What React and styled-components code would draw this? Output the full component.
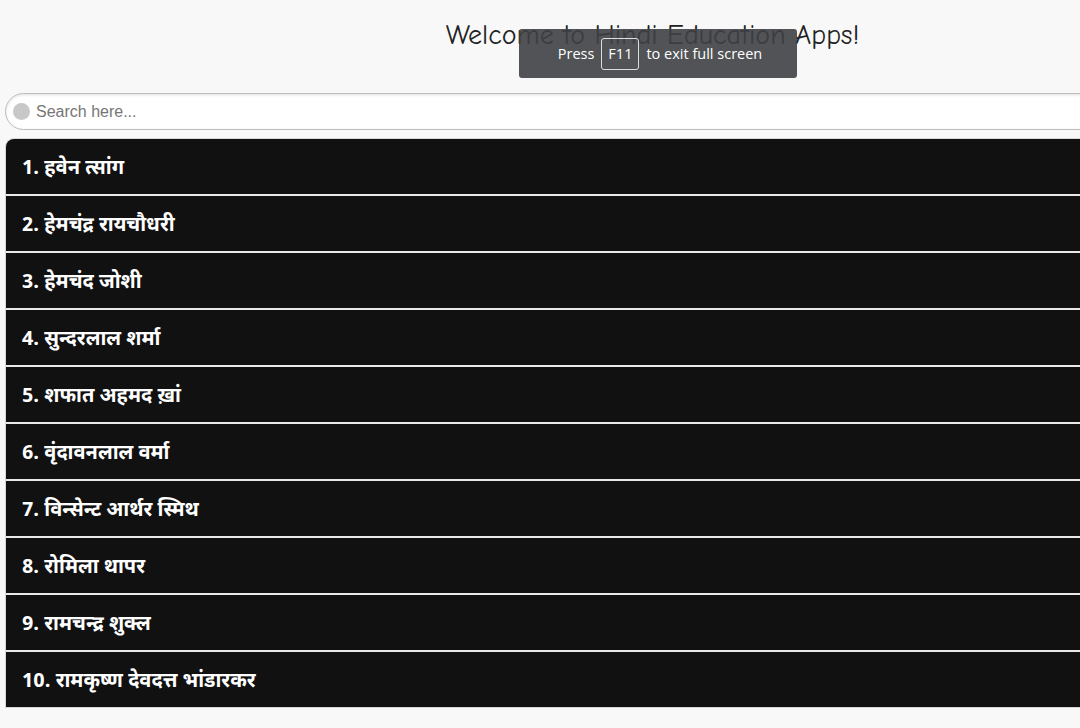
import React from "react";
import styled, { createGlobalStyle } from "styled-components";

const Global = createGlobalStyle`
  html, body { margin: 0; padding: 0; background: #f8f8f8; overflow: hidden; }
  body { width: 1080px; height: 728px; position: relative; }
`;

const Page = styled.div`
  width: 1300px;
  padding: 0 0 0 5px;
  box-sizing: border-box;
`;

const Title = styled.h1`
  margin: 0;
  height: 70px;
  display: flex;
  align-items: center;
  justify-content: center;
  font-family: "Comic Sans MS", "Comic Neue", cursive;
  font-weight: 500;
  font-size: 28px;
  color: #222;
`;

const SearchBox = styled.label`
  display: flex;
  align-items: center;
  gap: 6px;
  height: 37px;
  margin-top: 23px;
  box-sizing: border-box;
  border: 1px solid #bdbdbd;
  border-radius: 19px;
  background: #fff;
  box-shadow: inset 0 1px 3px rgba(0, 0, 0, 0.12);
  padding-left: 7px;
`;

const Dot = styled.span`
  width: 17px;
  height: 17px;
  border-radius: 50%;
  background: #c8c8c8;
  flex: none;
`;

const SearchInput = styled.input`
  border: none;
  outline: none;
  background: transparent;
  font-family: "Liberation Sans", Arial, sans-serif;
  font-size: 16px;
  color: #333;
  flex: 1;
  padding: 0;
  &::placeholder { color: #767676; }
`;

const List = styled.ul`
  list-style: none;
  margin: 8px 0 0;
  padding: 0;
  border: 1px solid #d6d6d6;
  border-right: none;
  border-radius: 9px 0 0 0;
  overflow: hidden;
  background: #e9e9e9;
`;

const Item = styled.li`
  height: 55px;
  box-sizing: border-box;
  background: #111;
  display: flex;
  align-items: center;
  padding: 4px 0 0 16px;
  margin-bottom: 2px;
  color: #fff;
  font-family: "Noto Sans Devanagari", "Lohit Devanagari", "Mangal", Tahoma, "DejaVu Sans", sans-serif;
  font-weight: bold;
  font-size: 20px;
  &:last-child { margin-bottom: 0; }
`;

const Toast = styled.div`
  position: absolute;
  left: 519px;
  top: 29px;
  width: 278px;
  height: 49px;
  border-radius: 3px;
  background: rgba(62, 64, 68, 0.9);
  display: flex;
  align-items: center;
  justify-content: center;
  gap: 7px;
  padding-left: 4px;
  box-sizing: border-box;
  font-family: "Open Sans", "Noto Sans", sans-serif;
  font-size: 14.5px;
  color: #fff;
`;

const Key = styled.span`
  border: 1px solid #ddd;
  border-radius: 3px;
  padding: 6px 6px;
  line-height: 18px;
`;

const names = [
  "हवेन त्सांग",
  "हेमचंद्र रायचौधरी",
  "हेमचंद जोशी",
  "सुन्दरलाल शर्मा",
  "शफात अहमद ख़ां",
  "वृंदावनलाल वर्मा",
  "विन्सेन्ट आर्थर स्मिथ",
  "रोमिला थापर",
  "रामचन्द्र शुक्ल",
  "रामकृष्ण देवदत्त भांडारकर",
];

export default function App() {
  return (
    <>
      <Global />
      <Page>
        <Title>Welcome to Hindi Education Apps!</Title>
        <SearchBox>
          <Dot />
          <SearchInput placeholder="Search here..." />
        </SearchBox>
        <List>
          {names.map((n, i) => (
            <Item key={i}>{i + 1}. {n}</Item>
          ))}
        </List>
      </Page>
      <Toast>
        <span>Press</span>
        <Key>F11</Key>
        <span>to exit full screen</span>
      </Toast>
    </>
  );
}
